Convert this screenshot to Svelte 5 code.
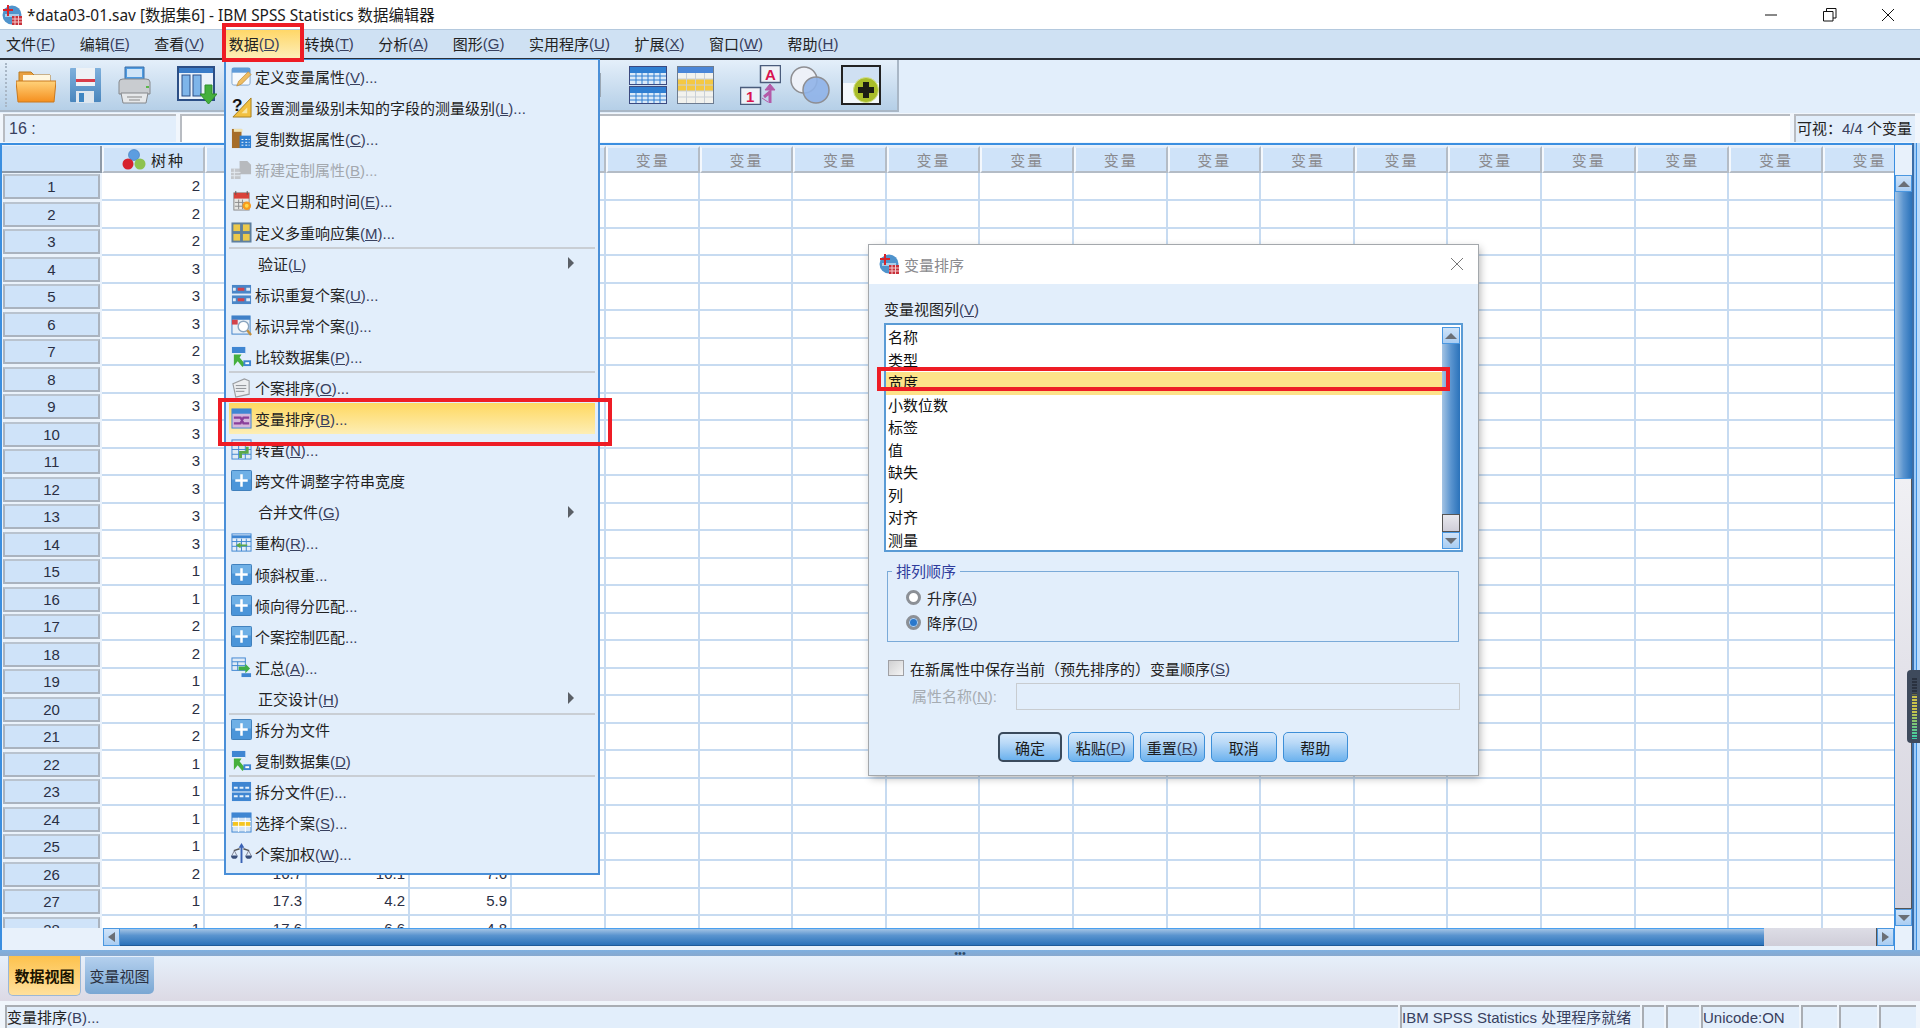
<script>
  const menus = [
    ['文件','F'],['编辑','E'],['查看','V'],['数据','D'],['转换','T'],['分析','A'],['图形','G'],['实用程序','U'],['扩展','X'],['窗口','W'],['帮助','H']
  ];
  const items = [
    {t:'定义变量属性',k:'V',e:'...',i:'varprop'},
    {t:'设置测量级别未知的字段的测量级别',k:'L',e:'...',i:'question'},
    {t:'复制数据属性',k:'C',e:'...',i:'copyprop'},
    {t:'新建定制属性',k:'B',e:'...',i:'newcustom',off:true},
    {t:'定义日期和时间',k:'E',e:'...',i:'date'},
    {t:'定义多重响应集',k:'M',e:'...',i:'multi'},
    {t:'验证',k:'L',sep:true,sub:true},
    {t:'标识重复个案',k:'U',e:'...',i:'dup'},
    {t:'标识异常个案',k:'I',e:'...',i:'anomaly'},
    {t:'比较数据集',k:'P',e:'...',i:'compare'},
    {t:'个案排序',k:'O',e:'...',i:'sortcases',sep:true},
    {t:'变量排序',k:'B',e:'...',i:'sortvars',on:true},
    {t:'转置',k:'N',e:'...',i:'transpose'},
    {t:'跨文件调整字符串宽度',i:'plus'},
    {t:'合并文件',k:'G',sub:true},
    {t:'重构',k:'R',e:'...',i:'restructure'},
    {t:'倾斜权重',e:'...',i:'plus'},
    {t:'倾向得分匹配',e:'...',i:'plus'},
    {t:'个案控制匹配',e:'...',i:'plus'},
    {t:'汇总',k:'A',e:'...',i:'aggregate'},
    {t:'正交设计',k:'H',sub:true},
    {t:'拆分为文件',i:'plus',sep:true},
    {t:'复制数据集',k:'D',i:'compare'},
    {t:'拆分文件',k:'F',e:'...',i:'splitfile',sep:true},
    {t:'选择个案',k:'S',e:'...',i:'select'},
    {t:'个案加权',k:'W',e:'...',i:'weight'}
  ];
  const first = [2,2,2,3,3,3,2,3,3,3,3,3,3,3,1,1,2,2,1,2,2,1,1,1,1,2,1,1];
  const extra = {26:['16.7','10.1','7.6'],27:['17.3','4.2','5.9'],28:['17.6','6.6','4.8']};
  const rows = first.map((v,i)=>({n:i+1,v,x:extra[i+1]||['','','']}));
  const varCols = Array(15).fill(0);
  const listItems = ['名称','类型','宽度','小数位数','标签','值','缺失','列','对齐','测量'];
</script>

{#snippet label(t,k,e)}{t}{#if k}<span class="lat">(<u>{k}</u>)</span>{/if}{#if e}<span class="lat">{e}</span>{/if}{/snippet}

{#snippet appIcon()}
  <svg class="appicon" viewBox="0 0 20 20">
    <circle cx="10" cy="10" r="9.5" fill="#4f93cc"/>
    <path d="M3 9h14v3H3z" fill="#a8cdea"/>
    <path d="M5 0h2v4h4v2H7v5H5V6H1V4h4z" fill="#d8232a"/>
    <rect x="10" y="11" width="10" height="9" fill="#c8303a"/>
    <path d="M10 14h10M10 17h10M13 11v9M16.500 11v9" stroke="#f3c9cb" stroke-width="1"/>
  </svg>
{/snippet}

{#snippet ico(k)}
  <svg class="mico" viewBox="0 0 22 22">
    {#if k==='plus'}
      <rect x="0.500" y="0.500" width="21" height="21" rx="1" fill="#4b95d9" stroke="#3b7cb9"/>
      <rect x="1" y="1" width="20" height="9" fill="#6fb0e6"/>
      <path d="M11 4.500v13M4.500 11h13" stroke="#fff" stroke-width="2.600"/>
    {:else if k==='varprop'}
      <rect x="1" y="2" width="19" height="18" rx="2" fill="#f5f9fd" stroke="#7fa6cf"/>
      <rect x="1" y="2" width="19" height="5" fill="#5f9bd8"/>
      <path d="M18 6l3 3-10 10-5 2 2-5z" fill="#efbd62" stroke="#b98534" stroke-width=".7"/>
    {:else if k==='question'}
      <path d="M21 1v20H2z" fill="#f2c040" stroke="#a67e20"/>
      <path d="M17 11v6h-6z" fill="#f8e6a6"/>
      <text x="1" y="15" class="qm">?</text>
    {:else if k==='copyprop'}
      <rect x="1" y="1" width="10" height="20" fill="#a66d28"/>
      <rect x="3" y="1" width="9" height="3" fill="#f0e2b0"/>
      <rect x="9" y="8" width="12" height="13" fill="#2f7fd2"/>
      <path d="M11 12h2M15 12h2M18.500 12h1M11 15h2M15 15h2M18.500 15h1M11 18h2M15 18h2M18.500 18h1" stroke="#fff"/>
    {:else if k==='newcustom'}
      <rect x="0" y="10" width="10" height="11" fill="#c3c6ca"/>
      <path d="M9 2h8l4 4v10H9z" fill="#b7babe"/>
      <path d="M0 14h10M0 17.500h10M3.500 10v11" stroke="#e4eaf0"/>
    {:else if k==='date'}
      <rect x="3" y="3" width="16" height="18" fill="#e7e7e4" stroke="#8a8a8a"/>
      <rect x="3" y="3" width="16" height="6" fill="#d9413a"/>
      <path d="M5 1v4M17 1v4" stroke="#555"/>
      <path d="M4 13h12M4 17h10M8 10v10M12 10v10" stroke="#8a8a8a"/>
      <circle cx="16.500" cy="16.500" r="4.500" fill="#f79a1e"/><circle cx="16.500" cy="16.500" r="2" fill="#ffd84a"/>
    {:else if k==='multi'}
      <rect x="0.500" y="0.500" width="21" height="21" fill="#5e7f9e"/>
      <rect x="2.500" y="2.500" width="7" height="7" fill="#ecc94b"/><rect x="12.500" y="2.500" width="7" height="7" fill="#ecc94b"/>
      <rect x="2.500" y="12.500" width="7" height="7" fill="#ecc94b"/><rect x="12.500" y="12.500" width="7" height="7" fill="#ecc94b"/>
    {:else if k==='dup'}
      <rect x="1" y="1" width="20" height="9" fill="#4a86c8"/><rect x="1" y="12" width="20" height="9" fill="#4a86c8"/>
      <path d="M7 4h7v3H7zM7 15h7v3H7z" fill="#d3424a"/>
      <path d="M2 4h3v3H2zM16 4h4v3h-4zM2 15h3v3H2zM16 15h4v3h-4z" fill="#dfeaf6"/>
    {:else if k==='anomaly'}
      <rect x="1" y="1" width="19" height="19" fill="#e8f0f8" stroke="#3f80c8"/>
      <rect x="1" y="1" width="19" height="4" fill="#3f80c8"/>
      <rect x="1" y="5" width="6" height="5" fill="#d3424a"/>
      <circle cx="13" cy="12" r="5.500" fill="#fff" stroke="#8aa5bf" stroke-width="1.500"/>
      <path d="M17 16l4 5" stroke="#c48f3c" stroke-width="2.500"/>
    {:else if k==='compare'}
      <rect x="1" y="1" width="14" height="7" fill="#3f86d2"/>
      <path d="M1 8h14" stroke="#fff"/>
      <path d="M3 9h8l-2 3 6 7-3 3-5-6-4 5z" fill="#45b03d"/>
      <rect x="13" y="15" width="8" height="6" fill="#3f86d2"/><rect x="15" y="17" width="4" height="2" fill="#fff"/>
    {:else if k==='sortcases'}
      <path d="M2 7l12-5 5 2v14l-14 3z" fill="#eceef0" stroke="#9a9da0" stroke-width="1.200"/>
      <path d="M5 9h11M5 12h11M5 15h9" stroke="#8b8e92"/>
    {:else if k==='sortvars'}
      <rect x="1" y="1" width="20" height="20" fill="#d5b7dc" stroke="#3f86d2"/>
      <rect x="1" y="1" width="20" height="5" fill="#3f86d2"/>
      <path d="M3 10h7l3 6h6M3 16h7l3-6h6" fill="none" stroke="#8a3f9a" stroke-width="2.400"/>
    {:else if k==='transpose'}
      <rect x="1" y="1" width="20" height="20" fill="#dfeaf6" stroke="#3f86d2"/>
      <path d="M1 5h20" stroke="#3f86d2" stroke-width="3"/>
      <path d="M1 11h20M1 16h20M8 5v16M15 5v16" stroke="#3f86d2"/>
      <path d="M17 8v6h-7v6" fill="none" stroke="#5aa84a" stroke-width="3"/>
    {:else if k==='restructure'}
      <rect x="1" y="2" width="20" height="18" fill="#e4eef8" stroke="#3f86d2"/>
      <path d="M1 5h20" stroke="#3f86d2" stroke-width="3"/>
      <path d="M1 10h20M1 15h20M6 7v13M11 7v13M16 7v13" stroke="#3f86d2"/>
      <path d="M5 14l5-3v2h7v2h-7v2z" fill="#5aa84a"/>
    {:else if k==='aggregate'}
      <rect x="1" y="1" width="14" height="13" fill="#dfeaf6" stroke="#3f86d2"/>
      <path d="M1 5h14M1 9h14M7 5v9" stroke="#3f86d2"/>
      <path d="M8 10h7V7l5 5-5 5v-3H8z" fill="#3fae46"/>
      <rect x="11" y="17" width="10" height="4" fill="#3f86d2"/>
    {:else if k==='splitfile'}
      <rect x="1" y="1" width="20" height="20" fill="#3f86d2"/>
      <path d="M3 7h4M9 7h4M15 7h4M3 16h4M9 16h4M15 16h4" stroke="#e8f2fb" stroke-width="2"/>
      <path d="M1 11.500h20" stroke="#fff"/>
    {:else if k==='select'}
      <rect x="1" y="1" width="20" height="20" fill="#d7e6f5" stroke="#3f86d2"/>
      <rect x="1" y="1" width="20" height="5" fill="#3f86d2"/>
      <rect x="2" y="10" width="18" height="5" fill="#f5c51f"/>
      <path d="M1 10h20M1 15h20M8 6v15M15 6v15" stroke="#fff"/>
    {:else if k==='weight'}
      <path d="M11 0l3 5h-2v16h-2V5H8z" fill="#3a62b4"/>
      <path d="M9 6L3 8M13 6l6 2" stroke="#555" stroke-width="1.500"/>
      <path d="M0 13a3 3 0 0 0 7 0zM15 13a3 3 0 0 0 7 0z" fill="#3a4f7a"/>
      <path d="M3.500 8L1 13M3.500 8L6 13M18.500 8L16 13M18.500 8L21 13" stroke="#667" stroke-width=".8"/>
    {/if}
  </svg>
{/snippet}

<div class="win">
  <header class="title">
    {@render appIcon()}
    <span class="ttext">*data03-01.sav [数据集6] - IBM SPSS Statistics 数据编辑器</span>
    <div class="wbtns">
      <svg viewBox="0 0 14 14" class="wb"><path d="M1 7h12" stroke="#111"/></svg>
      <svg viewBox="0 0 14 14" class="wb"><path d="M.500 3.500h9.500v9.500H.500zM3.500 3.500V.500h9.500v9.500h-3" fill="none" stroke="#111"/></svg>
      <svg viewBox="0 0 14 14" class="wb"><path d="M1 1l12 12M13 1L1 13" stroke="#111"/></svg>
    </div>
  </header>

  <nav class="menubar">
    {#each menus as m}
      <span class="mi" class:act={m[0]==='数据'}>{@render label(m[0],m[1])}</span>
    {/each}
  </nav>

  <div class="toolwrap">
    <div class="toolbar">
      <i class="grip"></i>
      <svg class="tb folder" viewBox="0 0 40 36">
        <path d="M3 5h12l3 3h16v10H3z" fill="#e8a040" stroke="#b97a20"/>
        <rect x="7" y="8" width="27" height="8" fill="#fff7e0"/>
        <path d="M0 14h40l-2 21H2z" fill="url(#fg)" stroke="#c9791e"/>
      </svg>
      <svg class="tb save" viewBox="0 0 33 36">
        <path d="M2 1h29a1 1 0 0 1 1 1v32a1 1 0 0 1-1 1H2a1 1 0 0 1-1-1V2a1 1 0 0 1 1-1z" fill="url(#bg)"/>
        <rect x="7" y="1" width="19" height="18" fill="#eef2f6"/>
        <rect x="7" y="12" width="19" height="3" fill="#d83c4a"/>
        <rect x="7" y="24" width="18" height="12" fill="#dfe7ef"/>
        <rect x="10" y="26" width="5" height="9" fill="#3f86c2"/>
      </svg>
      <svg class="tb print" viewBox="0 0 35 38">
        <path d="M8 1h19v14H8z" fill="#4f9be0" stroke="#3a6fa8"/>
        <rect x="10" y="3" width="15" height="8" fill="#cfe5f8"/>
        <path d="M2 16q0-3 4-3h23q4 0 4 3v12H2z" fill="#c9ccd0" stroke="#85888c"/>
        <rect x="29" y="20" width="3" height="2" fill="#5ab84a"/>
        <path d="M4 27h27l-2 10H6z" fill="#e6e8ea" stroke="#85888c"/>
        <path d="M10 31h15M12 34h11" stroke="#888"/>
      </svg>
      <svg class="tb vars" viewBox="0 0 40 38">
        <rect x="1" y="1" width="36" height="33" fill="#eaf2fb" stroke="#2c4f86" stroke-width="2"/>
        <rect x="2" y="2" width="34" height="5" fill="#3a7cc8"/>
        <rect x="5" y="9" width="8" height="21" fill="#7eb5ea" stroke="#2c4f86"/>
        <rect x="16" y="9" width="8" height="21" fill="#7eb5ea" stroke="#2c4f86"/>
        <path d="M28 19h7v9h5l-8.500 10L23 28h5z" fill="#45b03d" stroke="#2f8f2a"/>
      </svg>
      <div class="tbright">
        <i class="tsep"></i>
        <svg class="tb t1" viewBox="0 0 38 38">
          <rect x=".500" y=".500" width="37" height="18" fill="#dbeaf8" stroke="#3b4a80"/><rect x="1" y="1" width="36" height="6" fill="#2f7fd2"/>
          <path d="M1 10h36M1 14h36M7 7v11M13 7v11M19 7v11M25 7v11M31 7v11" stroke="#2f7fd2"/>
          <rect x=".500" y="20.500" width="37" height="17" fill="#dbeaf8" stroke="#3b4a80"/><rect x="1" y="21" width="36" height="6" fill="#2f7fd2"/>
          <path d="M1 30h36M1 34h36M7 27v10M13 27v10M19 27v10M25 27v10M31 27v10" stroke="#2f7fd2"/>
        </svg>
        <svg class="tb t2" viewBox="0 0 37 38">
          <rect x=".500" y=".500" width="36" height="37" fill="#f2f2ee" stroke="#6d7c90"/>
          <rect x="1" y="1" width="35" height="6" fill="#4a86d8"/>
          <rect x="1" y="13" width="35" height="12" fill="#f4c842"/>
          <path d="M1 13h35M1 19h35M1 25h35M1 31h35M9.500 7v30M18.500 7v30M27.500 7v30" stroke="#c9cfd6"/>
        </svg>
        <svg class="tb t3" viewBox="0 0 41 40">
          <rect x="20.500" y=".500" width="20" height="17" fill="#eef2f8" stroke="#4a5c7c" stroke-width="1.500"/>
          <text x="25" y="15" class="ta">A</text>
          <rect x=".500" y="22.500" width="20" height="17" fill="#eef2f8" stroke="#4a5c7c" stroke-width="1.500"/>
          <text x="6" y="37" class="ta">1</text>
          <path d="M30 38V27l-6 5" fill="none" stroke="#b45aa8" stroke-width="3"/>
          <path d="M30 19l5 6h-10zM22 33l6 4" fill="#b45aa8" stroke="#b45aa8"/>
        </svg>
        <svg class="tb t4" viewBox="0 0 40 38">
          <circle cx="14" cy="14" r="13" fill="#eef1f8" stroke="#8e8e92" stroke-width="1.500"/>
          <circle cx="26" cy="24" r="13" fill="#8fb2e8" fill-opacity=".9" stroke="#8e8e92" stroke-width="1.500"/>
        </svg>
        <svg class="tb t5" viewBox="0 0 40 40">
          <rect x="1" y="1" width="38" height="38" fill="url(#wg)" stroke="#222" stroke-width="2"/>
          <circle cx="25" cy="25" r="12.500" fill="#a9bd2a" stroke="#d3df8a"/>
          <path d="M22 17h6v5h5v6h-5v5h-6v-5h-5v-6h5z" fill="#1c1c14"/>
        </svg>
      </div>
    </div>
  </div>

  <div class="cellbar">
    <div class="cellref">16 :</div>
    <div class="cellinput"></div>
    <div class="visible">可视：<span class="lat">4/4</span> 个变量</div>
  </div>

  <section class="gridwrap">
    <div class="gridleft">
      <div class="ghead grow">
        <div class="corner"></div>
        <div class="hc first">
          <svg class="trees" viewBox="0 0 24 22">
            <circle cx="12" cy="6" r="5.500" fill="#5c9de0" stroke="#3f78b8" stroke-width=".6"/>
            <circle cx="6" cy="15" r="5.500" fill="#d6212e"/>
            <circle cx="18" cy="15" r="5.500" fill="#8dc24f"/>
          </svg>
          <span>树种</span>
        </div>
        <div class="hc"></div><div class="hc"></div><div class="hc"></div>
        {#each varCols as _}<div class="hc gray">变量</div>{/each}
      </div>
      <div class="gbody">
        {#each rows as r}
          <div class="grow rw">
            <div class="rh"><div class="rhb">{r.n}</div></div>
            <div class="c">{r.v}</div>
            {#each r.x as x}<div class="c">{x}</div>{/each}
            {#each varCols as _}<div class="c"></div>{/each}
          </div>
        {/each}
      </div>
      <div class="hbar">
        <div class="hblank"></div>
        <div class="sbtn"><i class="tri l"></i></div>
        <div class="htrack"></div>
        <div class="hthumb"></div>
        <div class="sbtn"><i class="tri r"></i></div>
      </div>
    </div>
    <div class="vbar">
      <div class="vtop"></div>
      <div class="vbtn"><i class="tri u"></i></div>
      <div class="vtrack"></div>
      <div class="vthumb"></div>
      <div class="vbtn"><i class="tri d"></i></div>
    </div>
    <div class="edge"></div>
  </section>

  <div class="split"><span class="dots">•••</span></div>

  <div class="tabs">
    <div class="tab on">数据视图</div>
    <div class="tab">变量视图</div>
  </div>

  <footer class="status">
    <div class="sc">变量排序<span class="lat">(B)...</span></div>
    <div class="sc">IBM SPSS Statistics 处理程序就绪</div>
    <div class="sc"></div><div class="sc"></div>
    <div class="sc">Unicode:ON</div>
    <div class="sc"></div><div class="sc"></div><div class="sc"></div>
  </footer>

  <div class="ribbon">
    <div class="ticks"></div>
  </div>

  <ul class="menu">
    {#each items as it}
      <li class="it" class:sep={it.sep} class:off={it.off} class:on={it.on}>
        {#if it.i}{@render ico(it.i)}{:else}<span class="noico"></span>{/if}
        <span>{@render label(it.t,it.k,it.e)}</span>
        {#if it.sub}<i class="subarrow"></i>{/if}
      </li>
    {/each}
  </ul>

  <div class="mark m1"></div>
  <div class="mark m2"></div>

  <div class="dlg">
    <div class="dtitle">
      {@render appIcon()}
      <span class="dt">变量排序</span>
      <svg viewBox="0 0 14 14" class="dx"><path d="M1 1l12 12M13 1L1 13" stroke="#777"/></svg>
    </div>
    <div class="dbody">
      <div class="dl">变量视图列<span class="lat">(<u>V</u>)</span></div>
      <div class="list">
        <div class="litems">
          {#each listItems as li,i}<div class="li" class:sel={i===2}>{li}</div>{/each}
        </div>
        <div class="lbar">
          <div class="lbtn"><i class="tri u"></i></div>
          <div class="ltrack"></div>
          <div class="lthumb"></div>
          <div class="lbtn"><i class="tri d"></i></div>
        </div>
      </div>
      <div class="group">
        <span class="legend">排列顺序</span>
        <div class="radio"><i class="rd"></i>升序<span class="lat">(<u>A</u>)</span></div>
        <div class="radio"><i class="rd chk"></i>降序<span class="lat">(<u>D</u>)</span></div>
      </div>
      <div class="check"><i class="cb"></i>在新属性中保存当前（预先排序的）变量顺序<span class="lat">(<u>S</u>)</span></div>
      <div class="attr">
        <span class="al">属性名称(<u>N</u>):</span>
        <div class="ai"></div>
      </div>
      <div class="btns">
        <div class="btn def">确定</div>
        <div class="btn">粘贴<span class="lat">(<u>P</u>)</span></div>
        <div class="btn">重置<span class="lat">(<u>R</u>)</span></div>
        <div class="btn">取消</div>
        <div class="btn">帮助</div>
      </div>
    </div>
    <div class="mark m3"></div>
  </div>

  <svg class="defs" width="0" height="0">
    <defs>
      <linearGradient id="fg" x1="0" y1="0" x2="0" y2="1"><stop offset="0" stop-color="#ffd27a"/><stop offset="1" stop-color="#f58f1e"/></linearGradient>
      <linearGradient id="bg" x1="0" y1="0" x2="0" y2="1"><stop offset="0" stop-color="#7fb0dc"/><stop offset="1" stop-color="#4a86bd"/></linearGradient>
      <linearGradient id="wg" x1="0" y1="0" x2="0" y2="1"><stop offset="0" stop-color="#cfe0f2"/><stop offset=".45" stop-color="#cfe0f2"/><stop offset=".46" stop-color="#f4f8fc"/><stop offset="1" stop-color="#f4f8fc"/></linearGradient>
    </defs>
  </svg>
</div>

<style>
  :global(body){margin:0;background:#fff;}
  .win{position:relative;width:1920px;height:1028px;overflow:hidden;display:flex;flex-direction:column;font:15px "Liberation Sans","Noto Sans CJK SC",sans-serif;color:#222;background:#e2eefb;}
  .lat{color:#38405e;}
  .title{height:29px;background:#fff;display:flex;align-items:center;padding-left:2px;flex:none;}
  .appicon{width:20px;height:20px;flex:none;}
  .ttext{margin-left:5px;font:15.4px "Noto Sans","Noto Sans CJK SC",sans-serif;color:#1a1a1a;}
  .wbtns{margin-left:auto;display:flex;gap:44.5px;padding-right:25px;align-items:center;}
  .wb{width:14px;height:14px;display:block;}
  .menubar{height:29px;flex:none;box-sizing:border-box;background:#cfe1f3;border-top:1px solid #b4c9de;display:flex;align-items:stretch;padding-left:1px;}
  .mi{display:flex;align-items:center;white-space:pre;padding:0 19.5px 2px 5px;}
  .mi.act{background:linear-gradient(#ffd768,#fdeeb8);padding-right:22px;margin-right:-2px;}
  .toolwrap{height:55px;flex:none;box-sizing:border-box;border-top:2px solid #2b3038;background:#e2eefb;}
  .toolbar{width:899px;height:52px;box-sizing:border-box;display:flex;align-items:center;padding-left:5px;background:linear-gradient(#e4effa,#b5cfe7);border-right:2px solid #a9b7c6;border-bottom:2px solid #a9b7c6;}
  .grip{width:2px;height:44px;border-left:2px dotted #a9b7c6;}
  .tb{display:block;flex:none;}
  .folder{width:40px;height:36px;margin-left:7px;}
  .save{width:33px;height:36px;margin-left:13px;}
  .print{width:35px;height:38px;margin-left:15px;}
  .vars{width:40px;height:38px;margin-left:25px;}
  .tbright{margin-left:auto;display:flex;align-items:center;padding-right:16px;}
  .tsep{width:2px;height:24px;background:#9aa6b2;margin-right:28px;}
  .t1{width:38px;height:38px;}
  .t2{width:37px;height:38px;margin-left:10px;}
  .t3{width:41px;height:40px;margin-left:26px;}
  .t4{width:40px;height:38px;margin-left:9px;}
  .t5{width:40px;height:40px;margin-left:11px;}
  .qm{font:900 18px "Liberation Sans",sans-serif;fill:#111;}
  .ta{font:900 15px "Liberation Sans",sans-serif;fill:#d9134f;}
  .cellbar{height:30px;flex:none;display:flex;padding:1px 5px 1px 3px;box-sizing:border-box;background:#f1f6fc;gap:4px;}
  .cellref{width:173px;box-sizing:border-box;background:#e2eefb;border-top:2px solid #b8bcc2;border-left:2px solid #b8bcc2;padding-left:4px;line-height:26px;font-size:16px;color:#38405e;}
  .cellinput{flex:1;background:#fff;border-top:2px solid #b8bcc2;border-left:2px solid #b8bcc2;}
  .visible{width:121px;box-sizing:border-box;background:#e2eefb;border-top:2px solid #b8bcc2;border-left:2px solid #b8bcc2;padding-left:1px;line-height:26px;white-space:nowrap;}
  .gridwrap{height:807px;flex:none;display:flex;}
  .gridleft{width:1892px;box-sizing:content-box;border-left:2px solid #3a8ee0;border-top:2px solid #3a8ee0;display:flex;flex-direction:column;padding-top:1px;background:#e8f1fb;min-width:0;}
  .grow{display:grid;grid-template-columns:100px 103px 102px 103px 102px 94px repeat(14,93.6px);}
  .ghead{height:27px;flex:none;overflow:hidden;}
  .corner{background:#cfe3f9;border-bottom:2px solid #8e9aa8;border-right:2px solid #8e9aa8;box-sizing:border-box;margin-top:0;}
  .hc{box-sizing:border-box;background:#cfe3f9;border:2px solid #b4bcc6;border-top-color:#e4eefa;border-left-color:#f4f8fd;display:flex;align-items:center;justify-content:center;letter-spacing:2px;}
  .hc.gray{color:#8a8a8e;}
  .hc.first{gap:5px;}
  .trees{width:24px;height:22px;}
  .gbody{flex:1;overflow:hidden;background:#fff;min-height:0;}
  .rw{height:27.5px;}
  .c{box-sizing:border-box;border-right:2px solid #c7dbf1;border-bottom:2px solid #c7dbf1;text-align:right;padding-right:3px;line-height:25px;overflow:hidden;color:#2a2f44;}
  .rh{background:#eaf2fb;padding:1px 2px 2px 1px;box-sizing:border-box;min-width:0;}
  .rhb{height:100%;box-sizing:border-box;background:#cfe3f9;border:2px solid #aab3bf;border-top-color:#b9c3cf;text-align:center;line-height:21px;color:#2a2f44;}
  .hbar{height:18px;flex:none;display:flex;margin-bottom:4px;}
  .hblank{width:100px;flex:none;background:#e8f1fb;margin-right:1px;}
  .sbtn{width:17px;flex:none;background:linear-gradient(#cfe3f9,#a9cdf2);border:1px solid #4a97e0;box-sizing:border-box;display:flex;align-items:center;justify-content:center;}
  .htrack{flex:1;background:linear-gradient(#a4c4e4,#5a94cf 40%,#2a72ba);border-top:1px solid #4aa0f0;border-bottom:1px solid #1e5a98;}
  .hthumb{width:112px;flex:none;background:linear-gradient(#dddde6,#cfcdd8);border-right:1px solid #555;}
  .tri{display:block;width:0;height:0;}
  .tri.l{border:5px solid transparent;border-left:0;border-right:7px solid #6a6f76;}
  .tri.r{border:5px solid transparent;border-right:0;border-left:7px solid #6a6f76;}
  .tri.u{border:6px solid transparent;border-top:0;border-bottom:6px solid #6a6f76;}
  .tri.d{border:6px solid transparent;border-bottom:0;border-top:6px solid #6a6f76;}
  .vbar{width:18px;flex:none;display:flex;flex-direction:column;border-left:1px solid #3a8ee0;box-sizing:border-box;background:#e8f1fb;padding-bottom:24px;border-top:2px solid #3a8ee0;}
  .vtop{height:30px;flex:none;}
  .vbtn{height:17px;flex:none;background:linear-gradient(#cfe3f9,#a9cdf2);border:1px solid #4a97e0;box-sizing:border-box;display:flex;align-items:center;justify-content:center;}
  .vtrack{height:286px;flex:none;background:linear-gradient(90deg,#a4c4e4,#5a94cf 50%,#2a72ba);}
  .vthumb{flex:1;background:linear-gradient(#f0f0f4,#d4d2dd);border-top:1px solid #4a97e0;border-right:1px solid #555;border-bottom:1px solid #555;}
  .edge{flex:1;background:linear-gradient(90deg,#3b6ea8 0 2px,#9ecbf8 2px 4px,#3a8ee0 4px 5px,#bcdcfb 5px);}
  .split{height:6px;flex:none;background:linear-gradient(#7fb0e0,#88a9cf);position:relative;display:flex;justify-content:center;align-items:center;}
  .dots{font-size:11px;line-height:6px;color:#2d4a6a;}
  .tabs{height:45px;flex:none;display:flex;align-items:flex-start;padding-left:8px;gap:4px;background:linear-gradient(#e6f0fb,#dcd9e4);}
  .tab{width:69px;height:37px;box-sizing:border-box;margin-top:1px;background:linear-gradient(#b4d0ee,#7aa7d3);border-radius:0 0 5px 5px;display:flex;align-items:center;justify-content:center;color:#2a3040;white-space:nowrap;font-size:15px;}
  .tab.on{width:73px;height:40px;margin-top:0;background:linear-gradient(#fdc24d,#ffe09c);border:1px solid #9bb7d6;border-top:0;color:#1a1400;font-weight:700;}
  .status{height:27px;flex:none;box-sizing:border-box;display:grid;grid-template-columns:1393px 240px 22px 33px 98px 36px 38px 37px;gap:2px;padding:4px 0 0 5px;background:#f0f5fb;}
  .sc{background:#e2eefb;border-top:2px solid #a9adb3;border-left:2px solid #a9adb3;box-sizing:border-box;line-height:21px;white-space:nowrap;color:#38405e;overflow:hidden;}
  .sc:first-child{color:#222;}
  .ribbon{position:absolute;left:1907px;top:670px;width:13px;height:73px;box-sizing:border-box;background:#3e4a5c;border-radius:4px 0 0 4px;padding:8px 0 4px 5px;}
  .ticks{width:5px;height:100%;background:repeating-linear-gradient(#0000 0 2px,#3e4a5c 2px 3px),linear-gradient(#2a3240 0 25%,#c9c24a 30% 55%,#8ac46c 70%,#38cfa8);}
  .menu{position:absolute;left:224px;top:59px;width:376px;height:816px;box-sizing:border-box;margin:0;padding:1px 3px 0;list-style:none;background:#e2eefb;border:2px solid #4a8fd8;border-top-width:1px;}
  .it{height:31.1px;position:relative;display:flex;align-items:center;white-space:pre;padding-left:2px;color:#222;}
  .it.sep::before{content:"";position:absolute;left:0;right:0;top:-1px;height:2px;background:#c9ced4;}
  .it.off,.it.off .lat{color:#a3a8ae;}
  .it.on{background:linear-gradient(#ffd860,#fdeeb5);}
  .mico{width:21px;height:21px;flex:none;margin-right:3px;}
  .noico{width:27px;flex:none;}
  .subarrow{position:absolute;right:21px;top:50%;margin-top:-6px;width:0;height:0;border:5px solid transparent;border-right:0;border-left:6px solid #5a5f66;border-top-width:6px;border-bottom-width:6px;}
  .mark{position:absolute;box-sizing:border-box;border:4px solid #ee1c25;pointer-events:none;}
  .m1{left:222px;top:23px;width:82px;height:39px;}
  .m2{left:218px;top:398px;width:394px;height:48px;}
  .m3{left:8px;top:122px;width:573px;height:24px;}
  .dlg{position:absolute;left:869px;top:245px;width:609px;height:530px;background:#e2eefb;box-shadow:0 0 0 1px #a4a8ac,2px 3px 8px rgba(0,0,0,.3);display:flex;flex-direction:column;}
  .dtitle{height:39px;flex:none;background:#fff;display:flex;align-items:center;padding-left:10px;padding-bottom:1px;box-sizing:border-box;}
  .dt{margin-left:5px;color:#8a8a8e;}
  .dx{width:14px;height:14px;margin-left:auto;margin-right:14px;}
  .dbody{padding:16px 15px 0;display:flex;flex-direction:column;}
  .dl{height:20px;line-height:20px;margin-bottom:3px;}
  .list{height:229px;box-sizing:border-box;border:2px solid #5a9bd5;background:#fff;display:flex;padding:2px 1px 1px 0;}
  .litems{flex:1;overflow:hidden;}
  .li{height:22.5px;line-height:22px;padding-left:2px;color:#111;}
  .li.sel{background:#fde289;}
  .lbar{width:18px;flex:none;display:flex;flex-direction:column;}
  .lbtn{height:17px;flex:none;background:linear-gradient(#cfe3f9,#a9cdf2);border:1px solid #4a97e0;box-sizing:border-box;display:flex;align-items:center;justify-content:center;}
  .ltrack{flex:1;background:linear-gradient(90deg,#a4c4e4,#5a94cf 50%,#2a72ba);}
  .lthumb{height:18px;flex:none;background:linear-gradient(#e8e8ee,#d0ced9);border:1px solid #555;box-sizing:border-box;}
  .group{position:relative;height:71px;box-sizing:border-box;margin:19px 4px 0 3px;border:1px solid #7aaad8;padding:13px 0 0 18px;}
  .legend{position:absolute;left:4px;top:-9px;background:#e2eefb;padding:0 4px;color:#2f3c9c;line-height:18px;}
  .radio{height:25px;display:flex;align-items:center;white-space:pre;color:#222;}
  .rd{width:15px;height:15px;box-sizing:border-box;border-radius:50%;background:#fff;border:3px solid #8c9096;margin-right:6px;flex:none;}
  .rd.chk{background:#2a78cc;border-color:#8c9096;box-shadow:inset 0 0 0 1px #bcd6f0;}
  .check{margin:16px 0 0 4px;height:20px;display:flex;align-items:center;white-space:pre;}
  .cb{width:16px;height:16px;box-sizing:border-box;background:linear-gradient(135deg,#d0d0d2,#f4f4f4);border:1px solid #a0a0a4;margin-right:6px;flex:none;}
  .attr{margin:5px 3px 0 28px;height:27px;display:flex;align-items:center;color:#a6acb2;white-space:pre;}
  .al{width:104px;flex:none;padding-bottom:3px;}
  .ai{flex:1;height:100%;box-sizing:border-box;border:1.500px solid #c8ccd0;}
  .btns{margin:22px 0 0 114px;display:flex;gap:6px;}
  .btn{width:65.5px;height:30px;box-sizing:border-box;border:1px solid #3d8fd8;border-radius:5px;background:linear-gradient(#d5e8fb,#b9d9f7 35%,#6cb2ee);display:flex;align-items:center;justify-content:center;white-space:pre;color:#1c1c1c;}
  .btn.def{width:64px;border:2px solid #3a4a5c;}
  .defs{position:absolute;}
</style>
